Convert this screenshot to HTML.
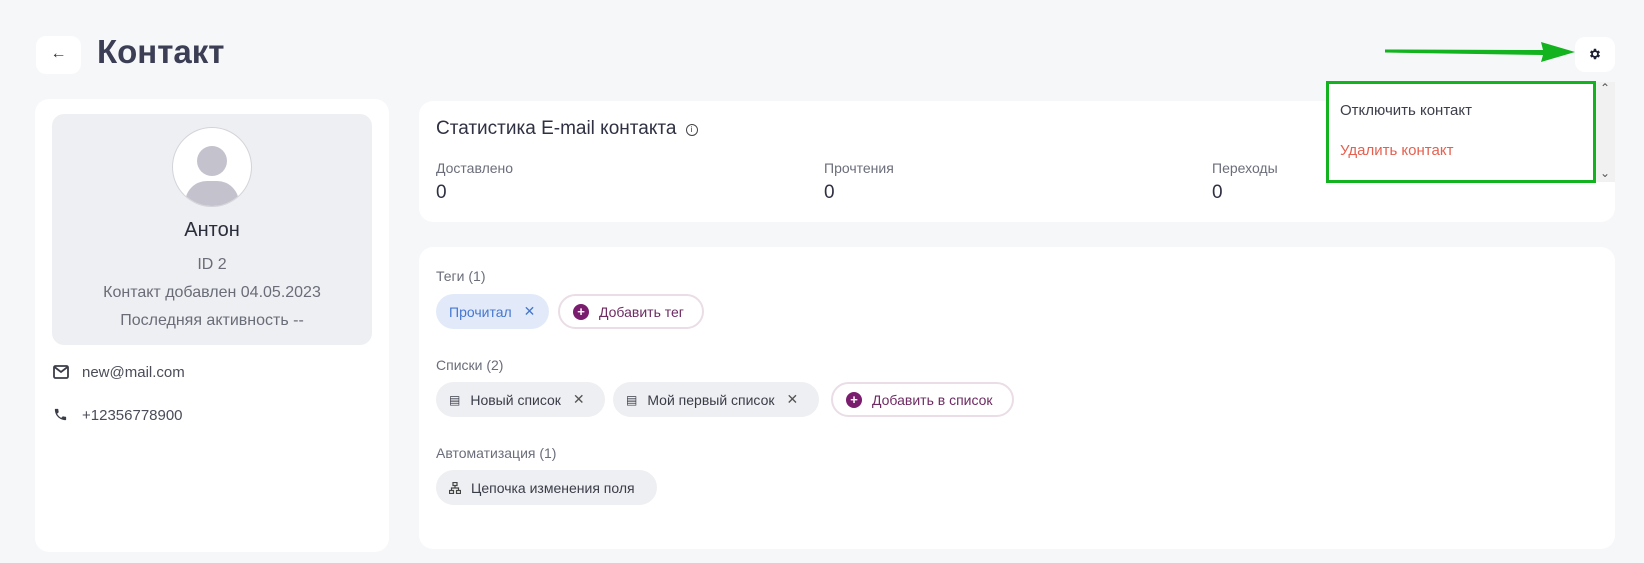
<!DOCTYPE html>
<html><head><meta charset="utf-8"><style>
*{box-sizing:border-box;margin:0;padding:0}
body{width:1644px;height:563px;background:#f6f7f9;font-family:"Liberation Sans",sans-serif;color:#2f3142;position:relative;overflow:hidden}
.a{position:absolute}
.card{position:absolute;background:#fff;border-radius:14px}
.lbl{position:absolute;font-size:14px;color:#6b6e7a}
.chip{position:absolute;height:35px;border-radius:18px;font-size:14px;display:flex;align-items:center;padding:0 13px;white-space:nowrap}
.grey{background:#eeeff2;color:#3a3c48}
.add{border:2px solid #eadde6;background:#fff;color:#6e2a63}
.plus{width:16px;height:16px;border-radius:50%;background:#7b1d6e;color:#fff;font-size:13px;line-height:16px;text-align:center;font-weight:bold;margin-right:10px}
.x{margin-left:12px;font-size:14px;color:#555}
</style></head><body>
<div class="a" style="left:36px;top:36px;width:45px;height:38px;background:#fff;border-radius:10px;font-size:16px;text-align:center;line-height:36px">&#8592;</div>
<div class="a" style="left:97px;top:33px;font-size:33px;font-weight:bold;color:#3b3e55">Контакт</div>

<div class="card" style="left:35px;top:99px;width:354px;height:453px"></div>
<div class="a" style="left:52px;top:114px;width:320px;height:231px;background:#eeeff2;border-radius:12px"></div>
<div class="a" style="left:172px;top:127px;width:80px;height:80px;border-radius:50%;background:#fff;border:1px solid #d3d3da;overflow:hidden">
<div class="a" style="left:24px;top:18px;width:30px;height:30px;border-radius:50%;background:#c4c3cd"></div>
<div class="a" style="left:12px;top:53px;width:54px;height:40px;border-radius:22px 22px 0 0;background:#c4c3cd"></div></div>
<div class="a" style="left:52px;width:320px;top:219px;text-align:center;font-size:20px;color:#2b2d3a">Антон</div>
<div class="a" style="left:52px;width:320px;top:256px;text-align:center;font-size:16px;color:#6a6c78">ID 2</div>
<div class="a" style="left:52px;width:320px;top:284px;text-align:center;font-size:16px;color:#6a6c78">Контакт добавлен 04.05.2023</div>
<div class="a" style="left:52px;width:320px;top:312px;text-align:center;font-size:16px;color:#6a6c78">Последняя активность --</div>
<svg class="a" style="left:53px;top:365px" width="16" height="14" viewBox="0 0 16 14"><rect x="1" y="1" width="14" height="12" rx="1.5" fill="none" stroke="#3a3c48" stroke-width="1.8"/><path d="M1.5 2l6.5 5 6.5-5" fill="none" stroke="#3a3c48" stroke-width="1.8"/></svg>
<div class="a" style="left:82px;top:364px;font-size:15px;color:#4a4c58">new@mail.com</div>
<svg class="a" style="left:53px;top:407px" width="15" height="15" viewBox="0 0 24 24"><path d="M6.6 10.8c1.4 2.8 3.8 5.1 6.6 6.6l2.2-2.2c.3-.3.7-.4 1-.2 1.1.4 2.3.6 3.6.6.6 0 1 .4 1 1V20c0 .6-.4 1-1 1C10.6 21 3 13.4 3 4c0-.6.4-1 1-1h3.5c.6 0 1 .4 1 1 0 1.3.2 2.5.6 3.6.1.3 0 .7-.2 1z" fill="#3a3c48"/></svg>
<div class="a" style="left:82px;top:407px;font-size:15px;color:#4a4c58">+12356778900</div>

<div class="card" style="left:419px;top:101px;width:1196px;height:121px"></div>
<div class="a" style="left:436px;top:118px;font-size:19px;color:#2f3142">Статистика E-mail контакта <span style="display:inline-block;width:12px;height:12px;border:1.5px solid #444;border-radius:50%;font-size:8px;line-height:9px;text-align:center;vertical-align:2px;margin-left:4px">i</span></div>
<div class="lbl" style="left:436px;top:160px">Доставлено</div>
<div class="lbl" style="left:824px;top:160px">Прочтения</div>
<div class="lbl" style="left:1212px;top:160px">Переходы</div>
<div class="a" style="left:436px;top:182px;font-size:19px">0</div>
<div class="a" style="left:824px;top:182px;font-size:19px">0</div>
<div class="a" style="left:1212px;top:182px;font-size:19px">0</div>

<div class="card" style="left:419px;top:247px;width:1196px;height:302px"></div>
<div class="lbl" style="left:436px;top:268px">Теги (1)</div>
<div class="chip" style="left:436px;top:294px;width:113px;background:#e2eafa;color:#4577d0">Прочитал<span class="x" style="color:#4577d0">✕</span></div>
<div class="chip add" style="left:558px;top:294px;width:146px"><span class="plus">+</span>Добавить тег</div>
<div class="lbl" style="left:436px;top:357px">Списки (2)</div>
<div class="chip grey" style="left:436px;top:382px;width:169px"><span style="font-size:12px;margin-right:10px">&#9636;</span>Новый список<span class="x">✕</span></div>
<div class="chip grey" style="left:613px;top:382px;width:206px"><span style="font-size:12px;margin-right:10px">&#9636;</span>Мой первый список<span class="x">✕</span></div>
<div class="chip add" style="left:831px;top:382px;width:183px"><span class="plus">+</span>Добавить в список</div>
<div class="lbl" style="left:436px;top:445px">Автоматизация (1)</div>
<div class="chip grey" style="left:436px;top:470px;width:221px"><svg width="12" height="12" viewBox="0 0 12 12" style="margin-right:10px"><rect x="4" y="0.5" width="4" height="3" fill="none" stroke="#444" stroke-width="1.2"/><rect x="0.5" y="8.5" width="4" height="3" fill="none" stroke="#444" stroke-width="1.2"/><rect x="7.5" y="8.5" width="4" height="3" fill="none" stroke="#444" stroke-width="1.2"/><path d="M6 3.5v2.5M2.5 8.5V6h7v2.5" fill="none" stroke="#444" stroke-width="1.2"/></svg>Цепочка изменения поля</div>

<div class="a" style="left:1575px;top:37px;width:40px;height:35px;background:#fff;border-radius:10px"></div>
<svg class="a" style="left:1588px;top:47px" width="14" height="14" viewBox="0 0 24 24"><path d="M19.4 13a7.5 7.5 0 000-2l2.1-1.6-2-3.5-2.5 1a7.6 7.6 0 00-1.7-1L15 3h-4l-.4 2.9c-.6.3-1.2.6-1.7 1l-2.5-1-2 3.5L6.6 11a7.5 7.5 0 000 2l-2.1 1.6 2 3.5 2.5-1c.5.4 1.1.7 1.7 1L11 21h4l.4-2.9c.6-.3 1.2-.6 1.7-1l2.5 1 2-3.5zM13 15.5a3.5 3.5 0 110-7 3.5 3.5 0 010 7z" fill="#1e2035" transform="translate(-1 0)"/></svg>
<svg class="a" style="left:1385px;top:40px" width="192" height="24"><path d="M0 9.5 L158 10 L156 2 L190 12 L156 22 L158 15 L0 12.5Z" fill="#12b31e"/></svg>

<div class="a" style="left:1326px;top:82px;width:289px;height:100px;background:#fff"></div>
<div class="a" style="left:1595px;top:82px;width:20px;height:100px;background:#f1f1f1;font-size:12px;color:#555;text-align:center">
<div style="position:absolute;top:-1px;width:20px">&#8963;</div><div style="position:absolute;bottom:2px;width:20px">&#8964;</div></div>
<div class="a" style="left:1326px;top:81px;width:270px;height:102px;border:3px solid #12b31e"></div>
<div class="a" style="left:1340px;top:102px;font-size:15px;color:#3c3e4a">Отключить контакт</div>
<div class="a" style="left:1340px;top:142px;font-size:15px;color:#e5604f">Удалить контакт</div>
</body></html>
